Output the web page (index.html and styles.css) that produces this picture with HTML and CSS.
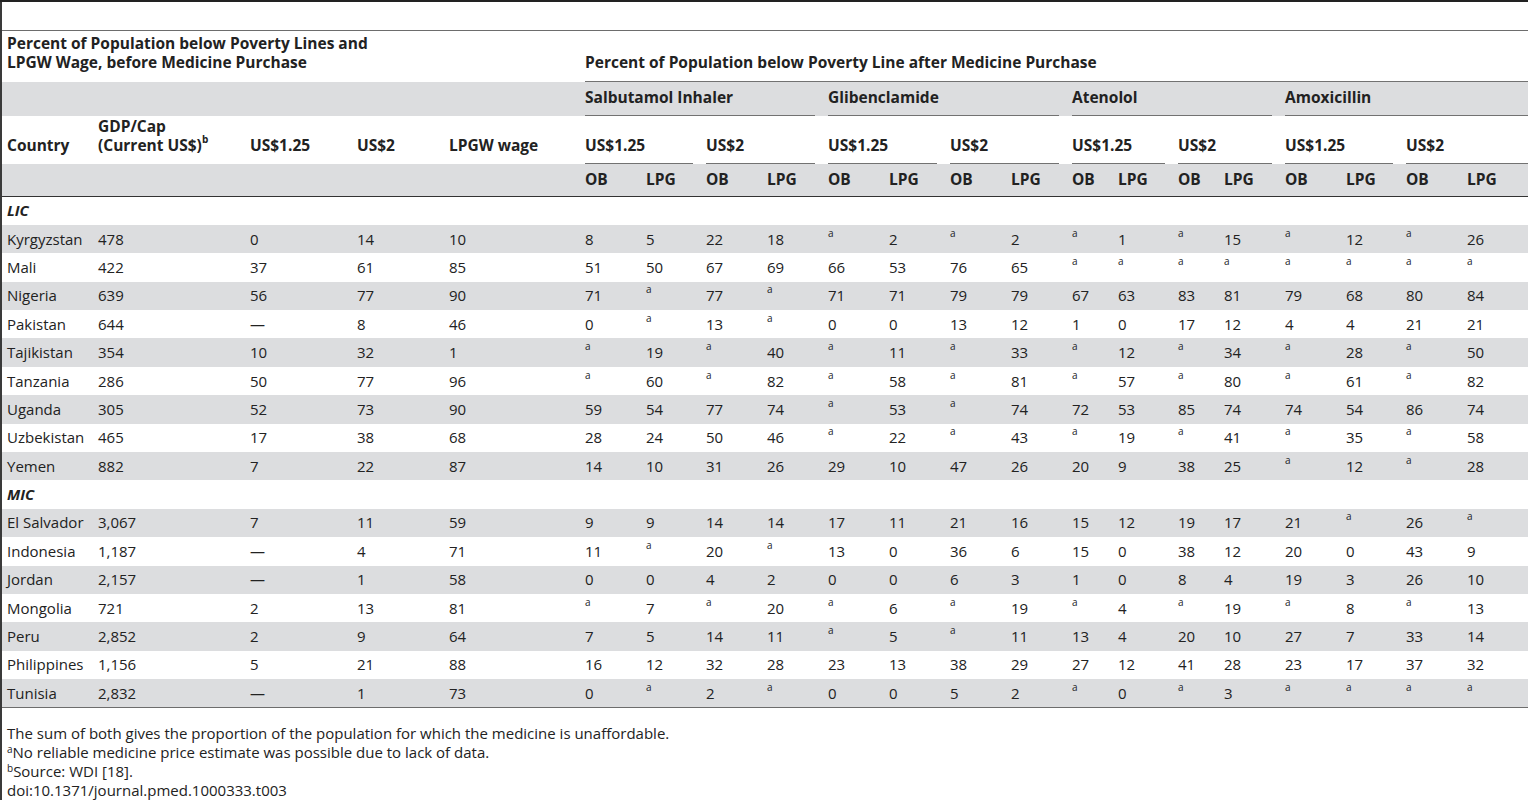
FILE: index.html
```html
<!DOCTYPE html>
<html lang="en">
<head>
  <meta charset="UTF-8">
  <title>Table 3. Percent of population below poverty lines</title>
  <link rel="stylesheet" href="styles.css">
</head>
<body>

<div class="page">
  <!-- empty caption strip above the table -->
  <div class="top-bar"></div>

  <table class="data">
    <colgroup>
      <col style="width:89px"><col style="width:152px"><col style="width:107px"><col style="width:92px"><col style="width:136px">
      <col style="width:61px"><col style="width:60px"><col style="width:61px"><col style="width:61px">
      <col style="width:61px"><col style="width:61px"><col style="width:61px"><col style="width:61px">
      <col style="width:46px"><col style="width:60px"><col style="width:46px"><col style="width:61px">
      <col style="width:61px"><col style="width:60px"><col style="width:61px"><col style="width:74px">
    </colgroup>
    <thead>
      <tr class="head-title">
        <th colspan="5" class="first"><div class="cell">Percent of Population below Poverty Lines and<br>LPGW Wage, before Medicine Purchase</div></th>
        <th colspan="16" class="last"><div class="cell rule">Percent of Population below Poverty Line after Medicine Purchase</div></th>
      </tr>
      <tr class="head-drug">
        <th colspan="5" class="first"><div class="cell"></div></th>
        <th colspan="4"><div class="cell rule">Salbutamol Inhaler</div></th>
        <th colspan="4"><div class="cell rule">Glibenclamide</div></th>
        <th colspan="4"><div class="cell rule">Atenolol</div></th>
        <th colspan="4" class="last"><div class="cell rule">Amoxicillin</div></th>
      </tr>
      <tr class="head-line">
        <th class="first"><div class="cell">Country</div></th>
        <th><div class="cell">GDP/Cap<br>(Current US$)<sup>b</sup></div></th>
        <th><div class="cell">US$1.25</div></th>
        <th><div class="cell">US$2</div></th>
        <th><div class="cell">LPGW wage</div></th>
        <th colspan="2"><div class="cell rule">US$1.25</div></th>
        <th colspan="2"><div class="cell rule">US$2</div></th>
        <th colspan="2"><div class="cell rule">US$1.25</div></th>
        <th colspan="2"><div class="cell rule">US$2</div></th>
        <th colspan="2"><div class="cell rule">US$1.25</div></th>
        <th colspan="2"><div class="cell rule">US$2</div></th>
        <th colspan="2"><div class="cell rule">US$1.25</div></th>
        <th colspan="2" class="last"><div class="cell rule">US$2</div></th>
      </tr>
      <tr class="head-sub">
        <th class="first"></th><th></th><th></th><th></th><th></th>
        <th>OB</th><th>LPG</th><th>OB</th><th>LPG</th>
        <th>OB</th><th>LPG</th><th>OB</th><th>LPG</th>
        <th>OB</th><th>LPG</th><th>OB</th><th>LPG</th>
        <th>OB</th><th>LPG</th><th>OB</th><th>LPG</th>
      </tr>
    </thead>
    <tbody>
      <tr class="group"><td colspan="21" class="first">LIC</td></tr>
      <tr><td class="first">Kyrgyzstan</td><td>478</td><td>0</td><td>14</td><td>10</td>
        <td>8</td><td>5</td><td>22</td><td>18</td>
        <td><sup>a</sup></td><td>2</td><td><sup>a</sup></td><td>2</td>
        <td><sup>a</sup></td><td>1</td><td><sup>a</sup></td><td>15</td>
        <td><sup>a</sup></td><td>12</td><td><sup>a</sup></td><td>26</td></tr>
      <tr><td class="first">Mali</td><td>422</td><td>37</td><td>61</td><td>85</td>
        <td>51</td><td>50</td><td>67</td><td>69</td>
        <td>66</td><td>53</td><td>76</td><td>65</td>
        <td><sup>a</sup></td><td><sup>a</sup></td><td><sup>a</sup></td><td><sup>a</sup></td>
        <td><sup>a</sup></td><td><sup>a</sup></td><td><sup>a</sup></td><td><sup>a</sup></td></tr>
      <tr><td class="first">Nigeria</td><td>639</td><td>56</td><td>77</td><td>90</td>
        <td>71</td><td><sup>a</sup></td><td>77</td><td><sup>a</sup></td>
        <td>71</td><td>71</td><td>79</td><td>79</td>
        <td>67</td><td>63</td><td>83</td><td>81</td>
        <td>79</td><td>68</td><td>80</td><td>84</td></tr>
      <tr><td class="first">Pakistan</td><td>644</td><td>—</td><td>8</td><td>46</td>
        <td>0</td><td><sup>a</sup></td><td>13</td><td><sup>a</sup></td>
        <td>0</td><td>0</td><td>13</td><td>12</td>
        <td>1</td><td>0</td><td>17</td><td>12</td>
        <td>4</td><td>4</td><td>21</td><td>21</td></tr>
      <tr><td class="first">Tajikistan</td><td>354</td><td>10</td><td>32</td><td>1</td>
        <td><sup>a</sup></td><td>19</td><td><sup>a</sup></td><td>40</td>
        <td><sup>a</sup></td><td>11</td><td><sup>a</sup></td><td>33</td>
        <td><sup>a</sup></td><td>12</td><td><sup>a</sup></td><td>34</td>
        <td><sup>a</sup></td><td>28</td><td><sup>a</sup></td><td>50</td></tr>
      <tr><td class="first">Tanzania</td><td>286</td><td>50</td><td>77</td><td>96</td>
        <td><sup>a</sup></td><td>60</td><td><sup>a</sup></td><td>82</td>
        <td><sup>a</sup></td><td>58</td><td><sup>a</sup></td><td>81</td>
        <td><sup>a</sup></td><td>57</td><td><sup>a</sup></td><td>80</td>
        <td><sup>a</sup></td><td>61</td><td><sup>a</sup></td><td>82</td></tr>
      <tr><td class="first">Uganda</td><td>305</td><td>52</td><td>73</td><td>90</td>
        <td>59</td><td>54</td><td>77</td><td>74</td>
        <td><sup>a</sup></td><td>53</td><td><sup>a</sup></td><td>74</td>
        <td>72</td><td>53</td><td>85</td><td>74</td>
        <td>74</td><td>54</td><td>86</td><td>74</td></tr>
      <tr><td class="first">Uzbekistan</td><td>465</td><td>17</td><td>38</td><td>68</td>
        <td>28</td><td>24</td><td>50</td><td>46</td>
        <td><sup>a</sup></td><td>22</td><td><sup>a</sup></td><td>43</td>
        <td><sup>a</sup></td><td>19</td><td><sup>a</sup></td><td>41</td>
        <td><sup>a</sup></td><td>35</td><td><sup>a</sup></td><td>58</td></tr>
      <tr><td class="first">Yemen</td><td>882</td><td>7</td><td>22</td><td>87</td>
        <td>14</td><td>10</td><td>31</td><td>26</td>
        <td>29</td><td>10</td><td>47</td><td>26</td>
        <td>20</td><td>9</td><td>38</td><td>25</td>
        <td><sup>a</sup></td><td>12</td><td><sup>a</sup></td><td>28</td></tr>
      <tr class="group"><td colspan="21" class="first">MIC</td></tr>
      <tr><td class="first">El Salvador</td><td>3,067</td><td>7</td><td>11</td><td>59</td>
        <td>9</td><td>9</td><td>14</td><td>14</td>
        <td>17</td><td>11</td><td>21</td><td>16</td>
        <td>15</td><td>12</td><td>19</td><td>17</td>
        <td>21</td><td><sup>a</sup></td><td>26</td><td><sup>a</sup></td></tr>
      <tr><td class="first">Indonesia</td><td>1,187</td><td>—</td><td>4</td><td>71</td>
        <td>11</td><td><sup>a</sup></td><td>20</td><td><sup>a</sup></td>
        <td>13</td><td>0</td><td>36</td><td>6</td>
        <td>15</td><td>0</td><td>38</td><td>12</td>
        <td>20</td><td>0</td><td>43</td><td>9</td></tr>
      <tr><td class="first">Jordan</td><td>2,157</td><td>—</td><td>1</td><td>58</td>
        <td>0</td><td>0</td><td>4</td><td>2</td>
        <td>0</td><td>0</td><td>6</td><td>3</td>
        <td>1</td><td>0</td><td>8</td><td>4</td>
        <td>19</td><td>3</td><td>26</td><td>10</td></tr>
      <tr><td class="first">Mongolia</td><td>721</td><td>2</td><td>13</td><td>81</td>
        <td><sup>a</sup></td><td>7</td><td><sup>a</sup></td><td>20</td>
        <td><sup>a</sup></td><td>6</td><td><sup>a</sup></td><td>19</td>
        <td><sup>a</sup></td><td>4</td><td><sup>a</sup></td><td>19</td>
        <td><sup>a</sup></td><td>8</td><td><sup>a</sup></td><td>13</td></tr>
      <tr><td class="first">Peru</td><td>2,852</td><td>2</td><td>9</td><td>64</td>
        <td>7</td><td>5</td><td>14</td><td>11</td>
        <td><sup>a</sup></td><td>5</td><td><sup>a</sup></td><td>11</td>
        <td>13</td><td>4</td><td>20</td><td>10</td>
        <td>27</td><td>7</td><td>33</td><td>14</td></tr>
      <tr><td class="first">Philippines</td><td>1,156</td><td>5</td><td>21</td><td>88</td>
        <td>16</td><td>12</td><td>32</td><td>28</td>
        <td>23</td><td>13</td><td>38</td><td>29</td>
        <td>27</td><td>12</td><td>41</td><td>28</td>
        <td>23</td><td>17</td><td>37</td><td>32</td></tr>
      <tr><td class="first">Tunisia</td><td>2,832</td><td>—</td><td>1</td><td>73</td>
        <td>0</td><td><sup>a</sup></td><td>2</td><td><sup>a</sup></td>
        <td>0</td><td>0</td><td>5</td><td>2</td>
        <td><sup>a</sup></td><td>0</td><td><sup>a</sup></td><td>3</td>
        <td><sup>a</sup></td><td><sup>a</sup></td><td><sup>a</sup></td><td><sup>a</sup></td></tr>
    </tbody>
  </table>

  <!-- Table footnotes -->
  <div class="notes">
    <p>The sum of both gives the proportion of the population for which the medicine is unaffordable.</p>
    <p><sup>a</sup>No reliable medicine price estimate was possible due to lack of data.</p>
    <p><sup>b</sup>Source: WDI [18].</p>
    <p>doi:10.1371/journal.pmed.1000333.t003</p>
  </div>
</div>

</body>
</html>
```

FILE: styles.css
```css
body {
  margin: 0;
  font-family: 'Open Sans', 'Noto Sans', sans-serif;
  color: #222;
  background-color: #fff;
  overflow: hidden;
}

/* Thin dark frame line down the left edge */
.page {
  border-left: 2px solid #3a3a3a;
  min-height: 100vh;
  box-sizing: border-box;
}

.top-bar {
  height: 28px;
  border-top: 2px solid #222;
  margin-left: -2px;
}

.data {
  border-collapse: collapse;
  table-layout: fixed;
  width: 1532px;
  font-size: 15px;
  line-height: 19px;
  border-top: 1px solid #6d6d6d;
  border-bottom: 1px solid #6d6d6d;
}

.data th,
.data td {
  padding: 0 6px 0 7px;
  text-align: left;
  white-space: nowrap;
  overflow: visible;
}

.data th {
  font-size: 15.5px;
  font-weight: 700;
  vertical-align: bottom;
}

.data td {
  vertical-align: middle;
}

.data .first {
  padding-left: 5px;
}

.data .last {
  padding-right: 0;
}

/* Header cells carry their underline on an inner block so the lines break between groups */
.cell {
  border-bottom: 1px solid transparent;
}

.cell.rule {
  border-bottom-color: #727272;
}

.head-title {
  height: 51px;
}

.head-title .cell {
  padding-bottom: 9px;
}

.head-drug {
  height: 34px;
  background-color: #dcdddf;
}

.head-drug .cell {
  padding-bottom: 8px;
}

.head-line {
  height: 48px;
}

.head-line .cell {
  padding-bottom: 8px;
}

.head-sub {
  height: 33px;
  background-color: #dcdddf;
}

.head-sub th {
  vertical-align: middle;
  padding-top: 1px;
  padding-bottom: 1px;
  border-bottom: 1px solid #333;
}

.data tbody tr {
  height: 28.4px;
}

.data tbody tr:nth-child(even) {
  background-color: #dcdddf;
}

.group td {
  font-weight: 700;
  font-style: italic;
}

sup {
  font-size: 10px;
  line-height: 0;
  vertical-align: 8px;
  font-weight: 400;
}

th sup {
  font-weight: 700;
}

.notes {
  padding: 16px 0 0 5px;
  font-size: 15px;
  line-height: 19px;
}

.notes p {
  margin: 0;
}

.notes sup {
  vertical-align: 5px;
}
```
